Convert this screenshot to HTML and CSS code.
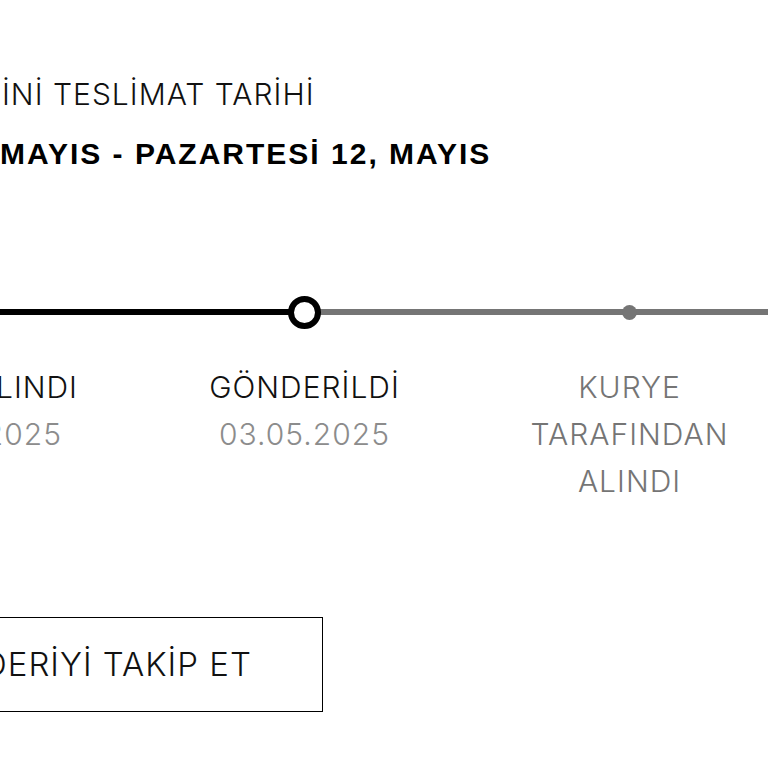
FILE: index.html
```html
<!DOCTYPE html>
<html lang="tr">
<head>
    <meta charset="UTF-8">
    <title>Sipariş takibi</title>
    <link rel="stylesheet" href="styles.css">
</head>
<body>
<main class="order">
    <header class="delivery">
        <p>İNİ TESLİMAT TARİHİ</p>
        <p class="date">MAYIS - PAZARTESİ 12, MAYIS</p>
    </header>
    <ol class="steps">
        <li class="step done">
            <span class="mark"></span>
            <p class="name">LINDI</p>
            <p class="day">2025</p>
        </li>
        <li class="step current">
            <span class="mark"></span>
            <p class="name">GÖNDERİLDİ</p>
            <p class="day">03.05.2025</p>
        </li>
        <li class="step">
            <span class="mark"></span>
            <p class="name">KURYE TARAFINDAN ALINDI</p>
        </li>
    </ol>
    <button class="track" type="button">DERİYİ TAKİP ET</button>
</main>
</body>
</html>
```

FILE: styles.css
```css
*,*:before,*:after{padding:0;margin:0;box-sizing:border-box;}
body{background:#fff;color:#111;font:300 30px/47px Inter,"Liberation Sans",sans-serif;letter-spacing:1px;}
.order{overflow:hidden;padding:65px 0 56px;}
.delivery p{padding-left:2px;line-height:59px;white-space:nowrap;}
.delivery .date{padding-left:0;color:#000;font-family:"Liberation Sans",Arial,sans-serif;font-weight:700;letter-spacing:2px;}

/* adımlar */
.steps{list-style:none;display:grid;grid-template-columns:repeat(3,325px);margin:112px 0 0 -183px;}
.step{display:flex;flex-direction:column;align-items:center;text-align:center;color:#757575;}
.mark{display:flex;align-items:center;justify-content:center;width:100%;height:34px;margin-bottom:35px;
    background:linear-gradient(#757575,#757575) center/100% 6px no-repeat;
}
.mark:after{content:"";width:15px;height:15px;border-radius:50%;background:#757575;}
.name{width:200px;}
.day{color:#8c8c8c;}
.done .name,.current .name{color:#111;}
.done .name,.done .day{width:auto;align-self:flex-end;padding-right:64px;}
.done .day{padding-right:80px;}
.done .mark{background-image:linear-gradient(#000,#000);}
.done .mark:after{display:none;}
.current .mark{background-image:linear-gradient(90deg,#000 50%,#757575 50%);}
.current .mark:after{width:33px;height:33px;background:#fff;border:6px solid #000;}

.track{display:block;height:95px;margin:112px 0 0 -18px;padding:0 70px 0 0;border:1px solid #000;background:#fff;color:#111;
    font:inherit;font-size:33px;letter-spacing:inherit;cursor:pointer;
}
```
